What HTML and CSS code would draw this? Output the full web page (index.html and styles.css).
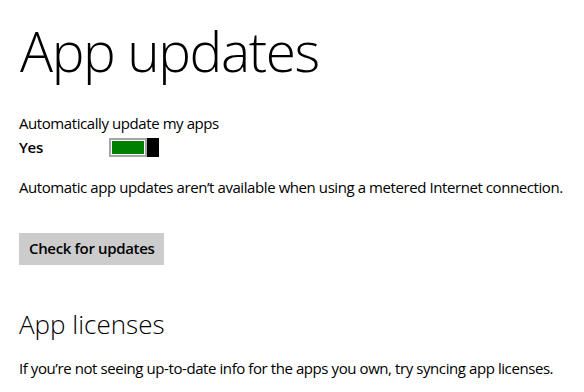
FILE: index.html
```html
<!DOCTYPE html>
<html lang="en">
<head>
<meta charset="utf-8">
<title>App updates</title>
<link rel="stylesheet" href="styles.css">
</head>
<body>
<main class="page">
  <h1 class="title">App updates</h1>
  <p class="label">Automatically update my apps</p>
  <div class="toggle-row">
    <span class="toggle-state">Yes</span>
    <span class="toggle" role="switch" aria-checked="true">
      <span class="toggle-track"><span class="toggle-fill"></span></span>
      <span class="toggle-thumb"></span>
    </span>
  </div>
  <p class="note">Automatic app updates aren’t available when using a metered Internet connection.</p>
  <button class="btn" type="button">Check for updates</button>
  <h2 class="subtitle">App licenses</h2>
  <p class="note2">If you’re not seeing up-to-date info for the apps you own, try syncing app licenses.</p>
</main>
</body>
</html>
```
FILE: styles.css
```css
html, body {
  margin: 0;
  padding: 0;
  background: #ffffff;
}
body {
  font-family: "Open Sans", "Noto Sans", sans-serif;
  color: #000000;
  width: 584px;
  height: 392px;
  overflow: hidden;
}
.page {
  padding: 23px 0 0 19px;
  display: flex;
  flex-direction: column;
  align-items: flex-start;
}
.title {
  margin: 0;
  font-size: 55px;
  line-height: 56px;
  font-weight: 300;
  letter-spacing: -1.4px;
  padding-left: 1px;
}
.label,
.note,
.note2 {
  font-size: 15px;
  line-height: 20px;
  letter-spacing: -0.42px;
  white-space: nowrap;
}
.label {
  margin: 34px 0 0;
}
.toggle-row {
  margin-top: 4px;
  display: flex;
  align-items: flex-start;
  height: 20px;
}
.toggle-state {
  width: 90px;
  font-size: 15px;
  line-height: 20px;
  font-weight: 600;
  letter-spacing: -0.3px;
}
.toggle {
  display: flex;
  margin-top: 1px;
  height: 19px;
}
.toggle-track {
  width: 38px;
  height: 19px;
  box-sizing: border-box;
  border: 2px solid #a6a6a6;
  padding: 1px;
  background: #ffffff;
  display: flex;
}
.toggle-fill {
  flex: 1;
  background: #008000;
}
.toggle-thumb {
  width: 12px;
  height: 19px;
  background: #000000;
}
.note {
  margin: 20px 0 0;
}
.btn {
  margin-top: 36px;
  height: 32px;
  padding: 5px 10px 7px;
  border: 0;
  background: #cccccc;
  font-family: inherit;
  font-size: 15px;
  line-height: 20px;
  font-weight: 600;
  letter-spacing: -0.35px;
  color: #000000;
}
.subtitle {
  margin: 43px 0 0;
  font-size: 26px;
  line-height: 32px;
  font-weight: 300;
}
.note2 {
  margin: 18px 0 0;
}
```
